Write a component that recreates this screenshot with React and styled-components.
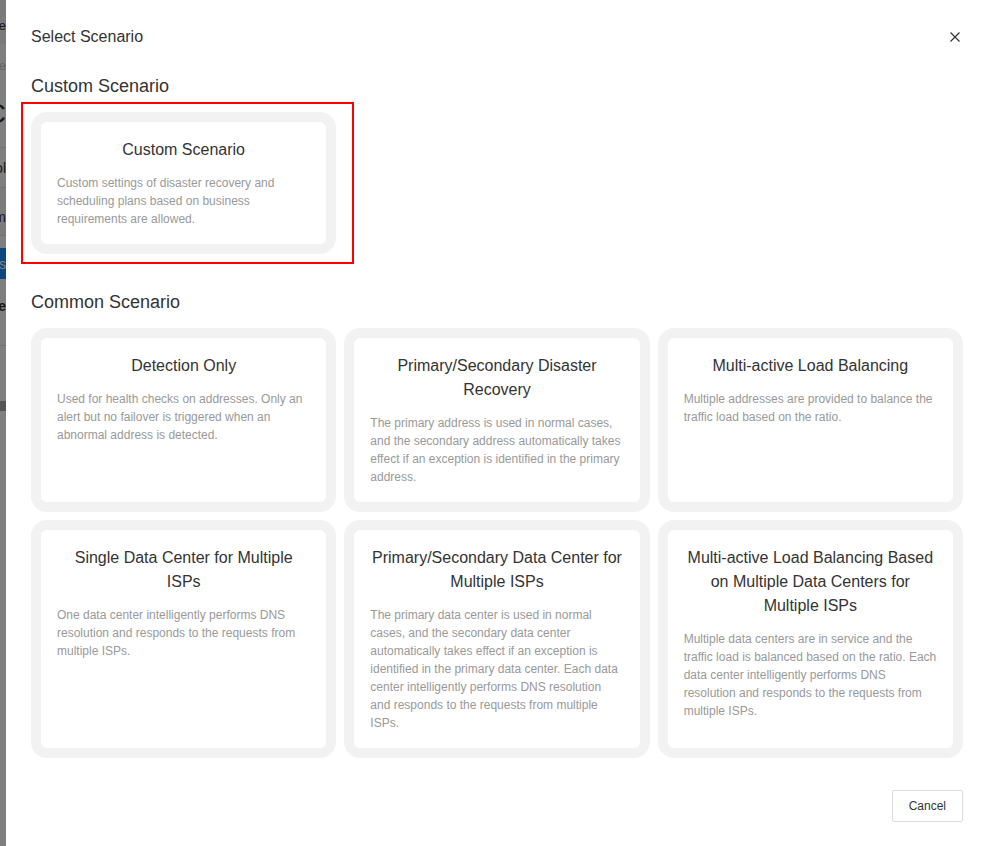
import React from 'react'
import styled, { createGlobalStyle } from 'styled-components'

const GlobalStyle = createGlobalStyle`
	html, body {
		margin: 0;
		padding: 0;
		height: 100%;
		overflow: hidden;
		background: #fff;
		font-family: 'Liberation Sans', Arial, sans-serif;
	}
	* {
		box-sizing: border-box;
	}
`

const BgPage = styled.div`
	width: 7px;
	height: 846px;
	overflow: hidden;
	display: flex;
	flex-direction: column;
	background: #fff;
`

const BgRow = styled.div`
	height: ${({ h }) => h}px;
	display: flex;
	align-items: center;
	justify-content: flex-end;
	white-space: nowrap;
	font-size: ${({ size }) => size || 14}px;
	line-height: 1;
	font-weight: ${({ bold }) => (bold ? 700 : 400)};
	color: ${({ color }) => color || '#333'};
	background: ${({ bg }) => bg || 'transparent'};
	border-bottom: ${({ line }) => (line ? '1px solid #e2e2e2' : 'none')};
	padding: ${({ shift = 0 }) => (shift > 0 ? `${shift}px 1px 0 0` : `0 1px ${-shift}px 0`)};
`

const Mask = styled.div`
	position: fixed;
	inset: 0;
	background: rgba(0, 0, 0, 0.5);
`

const Modal = styled.div`
	position: fixed;
	top: 0;
	left: 6px;
	right: 0;
	bottom: 0;
	background: #fff;
	color: #333;
	overflow: hidden;
`

const Header = styled.div`
	display: flex;
	justify-content: space-between;
	align-items: center;
	padding: 25px 23px 0 25px;
	height: 48px;
	h1 {
		margin: 0;
		font-size: 16px;
		line-height: 24px;
		font-weight: 400;
		color: #333;
	}
`

const CloseButton = styled.button`
	border: none;
	background: none;
	padding: 0;
	margin-right: 3px;
	width: 10px;
	height: 10px;
	display: flex;
	align-items: center;
	justify-content: center;
	cursor: pointer;
	svg {
		width: 10px;
		height: 10px;
		stroke: #333;
	}
`

const Body = styled.div`
	padding: 26px 23px 0 25px;
`

const SectionTitle = styled.h2`
	margin: ${({ first }) => (first ? '0' : '36px')} 0 14px;
	font-size: 18px;
	line-height: 24px;
	font-weight: 400;
	color: #333;
`

const Grid = styled.div`
	display: grid;
	grid-template-columns: repeat(3, 1fr);
	gap: 8px;
`

const Cell = styled.div`
	position: relative;
	display: flex;
	&::after {
		content: '';
		display: ${({ marked }) => (marked ? 'block' : 'none')};
		position: absolute;
		top: -10px;
		left: -10px;
		right: -18px;
		bottom: -10px;
		border: 2px solid #f00;
		pointer-events: none;
	}
`

const Card = styled.div`
	flex: 1;
	display: flex;
	padding: 10px;
	border-radius: 16px;
	background: #f2f2f2;
	cursor: pointer;
`

const CardInner = styled.div`
	flex: 1;
	padding: 16px;
	border-radius: 6px;
	background: #fff;
	h3 {
		margin: 0;
		font-size: 16px;
		line-height: 24px;
		font-weight: 400;
		text-align: center;
		color: #333;
	}
	p {
		margin: 12px 0 0;
		font-size: 12px;
		line-height: 18px;
		color: #999;
	}
`

const Footer = styled.div`
	display: flex;
	justify-content: flex-end;
	padding: 32px 23px 24px 25px;
`

const Button = styled.button`
	height: 32px;
	padding: 0 16px;
	border: 1px solid #dcdcdc;
	border-radius: 2px;
	background: #fff;
	font-family: inherit;
	font-size: 12px;
	color: #333;
	cursor: pointer;
`

const commonScenarios = [
	{
		title: 'Detection Only',
		desc: 'Used for health checks on addresses. Only an alert but no failover is triggered when an abnormal address is detected.',
	},
	{
		title: 'Primary/Secondary Disaster Recovery',
		desc: 'The primary address is used in normal cases, and the secondary address automatically takes effect if an exception is identified in the primary address.',
	},
	{
		title: 'Multi-active Load Balancing',
		desc: 'Multiple addresses are provided to balance the traffic load based on the ratio.',
	},
	{
		title: 'Single Data Center for Multiple ISPs',
		desc: 'One data center intelligently performs DNS resolution and responds to the requests from multiple ISPs.',
	},
	{
		title: 'Primary/Secondary Data Center for Multiple ISPs',
		desc: 'The primary data center is used in normal cases, and the secondary data center automatically takes effect if an exception is identified in the primary data center. Each data center intelligently performs DNS resolution and responds to the requests from multiple ISPs.',
	},
	{
		title: 'Multi-active Load Balancing Based on Multiple Data Centers for Multiple ISPs',
		desc: 'Multiple data centers are in service and the traffic load is balanced based on the ratio. Each data center intelligently performs DNS resolution and responds to the requests from multiple ISPs.',
	},
]

function ScenarioCard({ title, desc, marked }) {
	return (
		<Cell marked={marked}>
			<Card>
				<CardInner>
					<h3>{title}</h3>
					<p>{desc}</p>
				</CardInner>
			</Card>
		</Cell>
	)
}

export default function App() {
	return (
		<>
			<GlobalStyle />
			<BgPage>
				<BgRow h={44} bg='#f4f4f4' size={13} shift={6}>
					Name
				</BgRow>
				<BgRow h={56} color='#c8c8c8' size={13} shift={-14}>
					Manage
				</BgRow>
				<BgRow h={48} size={28} shift={-20} line>
					ABC
				</BgRow>
				<BgRow h={40} line>
					Pool
				</BgRow>
				<BgRow h={48} bg='#f7f7f7' shift={10} line>
					Item
				</BgRow>
				<BgRow h={12} />
				<BgRow h={31} bg='#1890ff' color='#fff'>
					Tags
				</BgRow>
				<BgRow h={67} bold shift={-12} line>
					Name
				</BgRow>
				<BgRow h={55} />
				<BgRow h={10} bg='#aaa' />
			</BgPage>
			<Mask />
			<Modal>
				<Header>
					<h1>Select Scenario</h1>
					<CloseButton aria-label='Close'>
						<svg viewBox='0 0 10 10' fill='none' strokeWidth='1.2'>
							<path d='M0.5 0.5 9.5 9.5 M9.5 0.5 0.5 9.5' />
						</svg>
					</CloseButton>
				</Header>
				<Body>
					<SectionTitle first>Custom Scenario</SectionTitle>
					<Grid>
						<ScenarioCard
							marked
							title='Custom Scenario'
							desc='Custom settings of disaster recovery and scheduling plans based on business requirements are allowed.'
						/>
					</Grid>
					<SectionTitle>Common Scenario</SectionTitle>
					<Grid>
						{commonScenarios.map((s) => (
							<ScenarioCard key={s.title} title={s.title} desc={s.desc} />
						))}
					</Grid>
				</Body>
				<Footer>
					<Button>Cancel</Button>
				</Footer>
			</Modal>
		</>
	)
}
